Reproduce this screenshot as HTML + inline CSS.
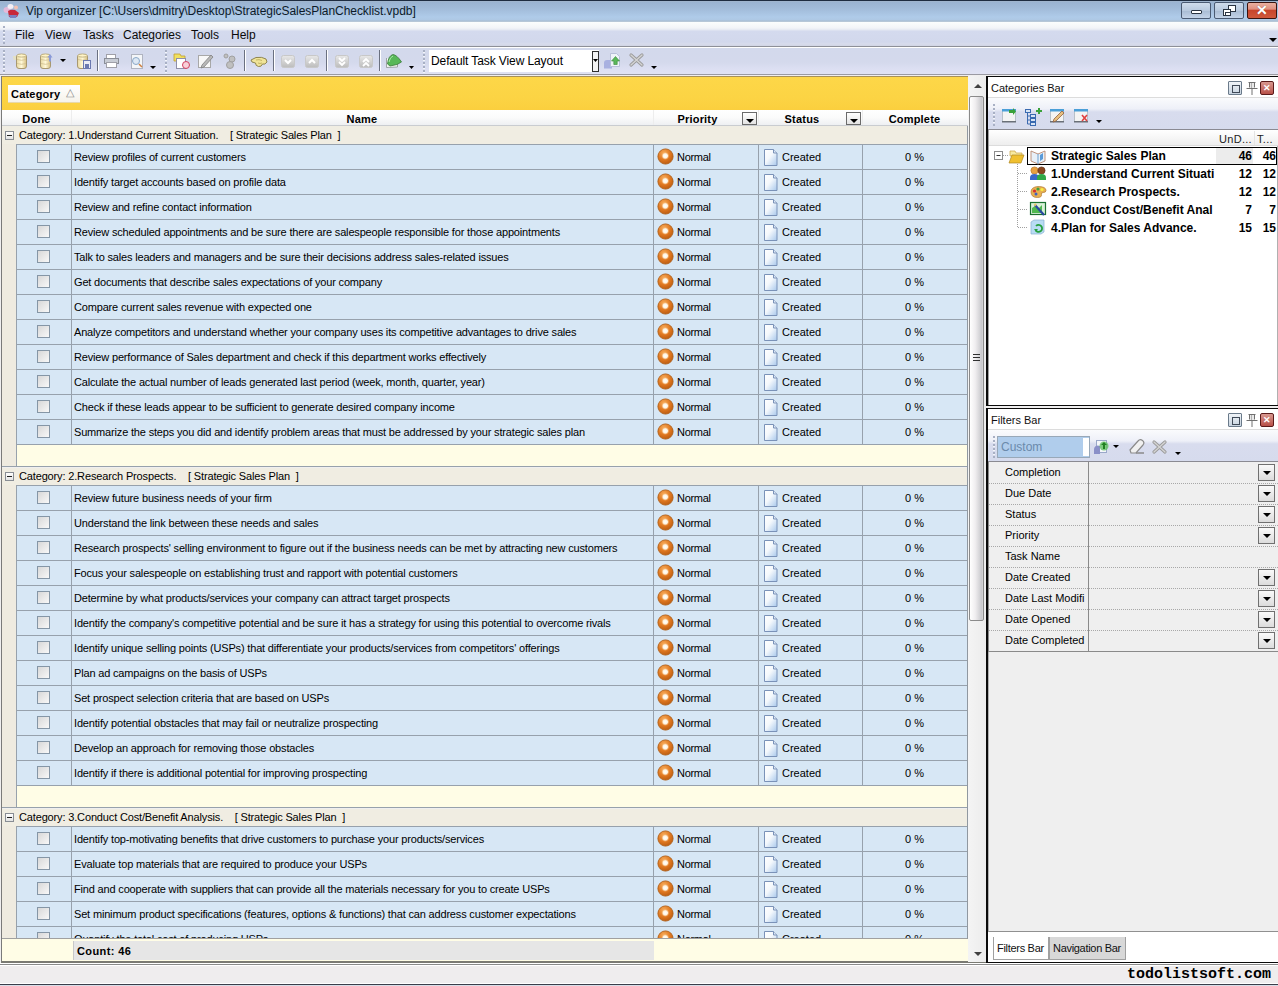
<!DOCTYPE html>
<html><head><meta charset="utf-8"><title>Vip organizer</title>
<style>
*{margin:0;padding:0;box-sizing:border-box}
html,body{width:1278px;height:986px;overflow:hidden;background:#f0efef}
body{font-family:"Liberation Sans",sans-serif;font-size:11px;color:#000;position:relative}
#root{position:absolute;left:0;top:0;width:1278px;height:986px;overflow:hidden}
div,span{position:absolute}
/* title */
#title{left:0;top:0;width:1278px;height:22px;background:linear-gradient(#a6b8cc 0,#9ab3d1 1px,#a2bcda 8px,#afcbe9 16px,#aec8e4 19px,#a9bccf 20px,#c4d2e0 21px);border-top:1px solid #1e2c40}
.ttl{left:26px;top:3px;font-size:12px;color:#0b1a2a;white-space:nowrap;letter-spacing:-0.05px}
.appicon{left:4px;top:3px;width:16px;height:14px;background:radial-gradient(circle at 60% 55%,#d02a3a 0,#e25a6a 45%,rgba(255,255,255,0) 70%)}
.wbtn{top:1px;width:30px;height:17px;border:1px solid #4a5a72;border-radius:2px;background:linear-gradient(#cfdcec 0,#b8c9de 50%,#a8bbd3 51%,#c3d3e8 100%)}
.wclose{background:linear-gradient(#eab0a0 0,#e09080 40%,#c8452c 50%,#d0583c 100%);border-color:#3a1410;color:#fff;text-align:center}
.wclose span{position:static;font-size:14px;font-weight:bold;line-height:15px;color:#fff;text-shadow:0 0 1px #804030}
.wmin{left:9px;top:7px;width:11px;height:4px;border:1px solid #2a3442;background:#fff;border-radius:1px}
.wres1{left:13px;top:2px;width:8px;height:7px;border:1px solid #2a3442;background:#fff}
.wres2{left:8px;top:6px;width:8px;height:7px;border:1px solid #2a3442;background:#fff}
.wres2::after{content:'';position:absolute;left:1px;top:2px;width:4px;height:2px;border:1px solid #2a3442}
/* menu */
#menu{left:0;top:22px;width:1278px;height:25px;background:linear-gradient(#fbfdfd 0,#f2f4f8 6px,#e4e8f2 8px,#d4daee 9px,#d2d8ec 20px,#d8dcec 22px,#d0d4e4 24px);border-bottom:1px solid #8e9098}
.mi{top:6px;font-size:12px;color:#0a0a0a;white-space:nowrap}
.grip{width:2px;background:repeating-linear-gradient(#a8b0c4 0,#a8b0c4 2px,#f4f6fa 2px,#f4f6fa 2.6px,transparent 2.6px,transparent 4px)}
.darr{width:0;height:0;border-left:4px solid transparent;border-right:4px solid transparent;border-top:4px solid #000}
/* toolbar */
#tool{left:0;top:47px;width:1278px;height:28px;background:linear-gradient(#d3d9ec 0,#d4d9ec 55%,#dcdff2 80%,#e0e2f2 100%);border-top:1px solid #fff;border-bottom:1px solid #9a9aa2}
.tsep{top:5px;width:1px;height:18px;background:#7f8797;box-shadow:1px 0 0 #fff}
/* grid */
#gpanel{left:1px;top:76px;width:967px;height:34px;background:linear-gradient(#fdd748 0,#fcd444 60%,#fbcf3e 100%);border-left:1px solid #7a7a7a;border-top:1px solid #a89058}
#catbtn{left:6px;top:8px;width:72px;height:18px;background:linear-gradient(#ffffff,#f6f3ea);border-bottom:1px solid #e8d8a8}
#catbtn b{position:absolute;left:3px;top:3px;font-size:11px;font-weight:bold;letter-spacing:0.2px}
#catbtn .tri{left:58px;top:1px;font-size:11px;color:#8a8a8a}
#ghead{left:1px;top:110px;width:967px;height:16px;background:linear-gradient(#ffffff 0,#fbfbfb 50%,#eef0f2 100%);border-left:1px solid #7a7a7a;border-bottom:1px solid #c9ccd0}
.hd{top:3px;text-align:center;font-weight:bold;font-size:11px;white-space:nowrap;letter-spacing:0.2px}
.hsep{top:0;width:1px;height:15px;background:#ededed}
.hbtn{top:2px;width:15px;height:13px;border:1px solid #6b6b6b;background:linear-gradient(#ffffff,#e4e4e4)}
.hbtn::after{content:"";position:absolute;left:3px;top:6px;border-left:4px solid transparent;border-right:4px solid transparent;border-top:4px solid #000}
#gbody{left:0;top:0;width:0;height:0}
.grp{left:2px;width:966px;height:18px;background:#f0ede2}
.grp .exp{left:3px;top:5px;width:9px;height:9px;border:1px solid #888d94;background:linear-gradient(#fff,#e3e3e3)}
.grp .exp::after{content:"";position:absolute;left:1px;top:3px;width:5px;height:1px;background:#222}
.gt{left:17px;top:3px;white-space:nowrap;letter-spacing:-0.15px}
.hl{left:2px;width:966px;height:1px;background:linear-gradient(to right,#efebe0 0,#efebe0 14px,#97a1ac 14px)}
.row{left:2px;width:966px;height:25px;background:linear-gradient(to right,#efebe0 0,#efebe0 14px,#97a1ac 14px,#97a1ac 15px,#d7e7f5 15px);}
.row::after{content:"";position:absolute;left:14px;right:0;bottom:0;height:1px;background:#97a1ac}
.row::before{content:"";position:absolute;left:69px;top:0;width:1px;height:24px;background:#97a1ac;box-shadow:582px 0 0 #97a1ac,687px 0 0 #97a1ac,791px 0 0 #97a1ac}
.cb{left:35px;top:5px;width:13px;height:13px;border:1px solid #8596a6;background:linear-gradient(135deg,#d8d8d8,#f8f8f8)}
.nm{left:72px;top:6px;white-space:nowrap;letter-spacing:-0.17px}
.pri{position:absolute;left:655px;top:3px}
.pt{left:675px;top:6px;white-space:nowrap;letter-spacing:-0.3px}
.doc{position:absolute;left:762px;top:4px}
.st{left:780px;top:6px;white-space:nowrap}
.pc{left:903px;top:6px;white-space:nowrap}
.newrow{left:2px;width:966px;height:22px;background:linear-gradient(to right,#efebe0 0,#efebe0 14px,#97a1ac 14px,#97a1ac 15px,#fffde6 15px);border-bottom:1px solid #97a1ac}
#gfoot{left:1px;top:938px;width:967px;height:25px;background:#fffde6;border-top:1px solid #a0a0a0;border-left:1px solid #7a7a7a;border-bottom:2px solid #7a7a72}
.cnt{left:71px;top:2px;width:581px;height:19px;background:#e6e6e6;border-left:1px solid #c8c8c8}
.cnt b{position:absolute;left:3px;top:4px;font-size:11px;letter-spacing:0.4px}
#vscroll{left:968px;top:76px;width:18px;height:886px;background:linear-gradient(to right,#f4f4f4,#ececec)}
#gleft{left:1px;top:76px;width:1px;height:886px;background:#7a7a7a}
#gright{left:967px;top:126px;width:1px;height:813px;background:#9098a0}
#gbot{left:1px;top:961px;width:985px;height:2px;background:#7a7a72}
.sarr{left:0;width:17px;height:18px}
.sarr.up::after{content:"";position:absolute;left:6px;top:8px;border-left:4px solid transparent;border-right:4px solid transparent;border-bottom:4px solid #404040}
.sarr.dn{top:870px}
.sarr.dn::after{content:"";position:absolute;left:6px;top:6px;border-left:4px solid transparent;border-right:4px solid transparent;border-top:4px solid #404040}
.thumb{left:1px;top:20px;width:15px;height:525px;border:1px solid #8a8a8a;border-radius:2px;background:linear-gradient(to right,#ffffff 0,#f0eef0 40%,#c8c8cc 90%,#d8d8d8 100%)}
/* status */
#status{left:0;top:963px;width:1278px;height:21px;background:linear-gradient(#ffffff 0,#ffffff 1px,#8a8a8a 1px,#8a8a8a 2px,#ffffff 2px,#ffffff 3px,#efedee 3px,#efedee 20px,#ffffff 20px)}
.brand{right:7px;top:3px;font-family:"Liberation Mono",monospace;font-weight:bold;font-size:15px;color:#000}
#taskbar{left:0;top:984px;width:1278px;height:2px;background:linear-gradient(#3a3e4a 0,#3a3e4a 1px,#d8dee8 1px)}
/* right panels */
#rp{left:0;top:0;width:0;height:0}
.pborder{border:2px solid #0a0a0a;border-right:none;background:#fff}
.phead{background:#fff;border-bottom:1px solid #dcdcdc}
.ptitle{left:3px;top:5px;font-size:11px;color:#111;white-space:nowrap}
.pfloat{top:4px;width:14px;height:14px;border:1px solid #6a7a8a;border-radius:1px;background:linear-gradient(#f0f4f8,#c8d4e0)}
.pfloat::after{content:"";position:absolute;left:3px;top:3px;width:6px;height:6px;border:1px solid #404a58}
.ppin{top:5px;width:11px;height:12px}
.ppin::before{content:"";position:absolute;left:2px;top:0;width:7px;height:6px;border:1px solid #707070;border-top-width:2px}
.ppin::after{content:"";position:absolute;left:5px;top:7px;width:1px;height:5px;background:#707070}
.pclose{top:4px;width:14px;height:14px;border:1px solid #5a1a1a;border-radius:2px;background:linear-gradient(#d89890,#b85048);color:#fff;font-size:9px;font-weight:bold;line-height:12px;text-align:center}
.ptool{background:linear-gradient(#fafbfd 0,#eef0f8 35%,#d8dcee 45%,#d6dbed 100%);border-bottom:1px solid #8a8a92}
.tree{background:#fff;border-left:1px solid #a0a0a0;border-right:1px solid #b0b0b0}
.thead{left:0;top:0;width:290px;height:16px;background:linear-gradient(#ffffff,#eeeeee);border-bottom:1px solid #dcdcdc}
.thead span{font-size:11px;top:3px !important;white-space:nowrap;letter-spacing:0.3px}
.tt{font-weight:bold;font-size:12px;white-space:nowrap;color:#000}
.tn{font-weight:bold;font-size:12px;text-align:right;color:#000}
.combo2{left:9px;top:6px;width:93px;height:22px;background:#b0cdec;border:1px solid #98a8b8}
.combo2 span{left:3px;top:3px;font-size:12px;color:#6b8aab}
.c2btn{left:85px;top:1px;width:6px;height:18px;background:#fff}
.fgrid{left:988px;top:462px;width:290px;height:190px;background:#efefef;border-left:1px solid #8a8a8a;border-bottom:1px solid #8a8a8a}
.frow{left:0;width:289px;height:21px;border-bottom:1px dotted #a8a8a8}
.frow span{left:16px;top:3px;font-size:11px;white-space:nowrap}
.fdiv{left:99px;top:-1px;width:1px;height:22px;background:#8a8a8a}
.fbtn{left:269px;top:1px;width:17px;height:17px;border:1px solid #707070;background:linear-gradient(#fafafa,#dcdcdc)}
.fbtn::after{content:"";position:absolute;left:4px;top:6px;border-left:4px solid transparent;border-right:4px solid transparent;border-top:4px solid #000}
.fempty{left:988px;top:652px;width:290px;height:280px;background:#efefef;border-bottom:1px solid #909090;border-left:1px solid #b0b0b0}
.tabs{left:988px;top:932px;width:290px;height:30px;background:#fff}
.tab{top:5px;height:23px;border:1px solid #a0a0a0;border-top:none;font-size:11px;padding:5px 0 0 3px;letter-spacing:-0.3px;white-space:nowrap;background:#d8d8d8;color:#111}
.tab.act{background:#fff;width:56px}
.tab:not(.act){width:77px}

.tgrip{left:3px;top:257px;width:7px;height:7px;background:repeating-linear-gradient(#303030 0,#303030 1px,transparent 1px,transparent 3px)}

.frow:last-child{border-bottom:none}

</style></head><body>
<svg width="0" height="0" style="position:absolute">
<defs>
<radialGradient id="gpri" cx="0.4" cy="0.3" r="0.75"><stop offset="0" stop-color="#f8b060"/><stop offset="0.55" stop-color="#e07820"/><stop offset="1" stop-color="#b85a10"/></radialGradient>
<radialGradient id="gspot" cx="0.5" cy="0.5" r="0.5"><stop offset="0" stop-color="#ffffff"/><stop offset="0.55" stop-color="#fff4e0"/><stop offset="1" stop-color="#f4b070" stop-opacity="0"/></radialGradient>
<linearGradient id="gdoc" x1="0" y1="0" x2="1" y2="1"><stop offset="0" stop-color="#ffffff"/><stop offset="0.45" stop-color="#f4f8fc"/><stop offset="1" stop-color="#a8c8ec"/></linearGradient>
<symbol id="ipri" viewBox="0 0 17 17"><circle cx="8.5" cy="8.5" r="7.6" fill="url(#gpri)" stroke="#b06018" stroke-width="0.9"/><circle cx="8.3" cy="7.9" r="4" fill="url(#gspot)"/></symbol>
<symbol id="idoc" viewBox="0 0 14 17"><path d="M0.5 0.5h9l3.5 3.5v12.5h-12.5z" fill="url(#gdoc)" stroke="#7a92b8"/><path d="M9.5 0.5v3.5h3.5" fill="#dbe6f4" stroke="#7a92b8"/></symbol>
</defs></svg>
<div id="root">
<!-- title bar -->
<div id="title"><svg style="position:absolute;left:2px;top:1px" width="18" height="18" viewBox="0 0 18 18"><ellipse cx="5" cy="8" rx="3.5" ry="3" fill="#f4b8d8" opacity="0.8"/><ellipse cx="8.5" cy="4.5" rx="3" ry="2.5" fill="#f4eef4"/><ellipse cx="14" cy="5.5" rx="2" ry="2" fill="#f4c0b0"/><path d="M6 9q3-2 7-1l4 3-2 4h-8z" fill="#c8283a"/><path d="M7 13h8l-1 3h-6z" fill="#7a80c0"/></svg><span class="ttl">Vip organizer [C:\Users\dmitry\Desktop\StrategicSalesPlanChecklist.vpdb]</span>
<div class="wbtn" style="left:1181px"><div class="wmin"></div></div>
<div class="wbtn" style="left:1214px"><div class="wres1"></div><div class="wres2"></div></div>
<div class="wbtn wclose" style="left:1247px"><span>&#x2715;</span></div>
</div>
<!-- menu -->
<div id="menu"><div class="grip" style="left:3px;top:4px;height:18px"></div>
<span class="mi" style="left:15px">File</span>
<span class="mi" style="left:45px">View</span>
<span class="mi" style="left:83px">Tasks</span>
<span class="mi" style="left:123px">Categories</span>
<span class="mi" style="left:191px">Tools</span>
<span class="mi" style="left:231px">Help</span>
<div class="darr" style="left:1269px;top:16px"></div>
</div>
<!-- toolbar -->
<div id="tool">
<div class="grip" style="left:3px;top:2px;height:23px"></div>
<div class="grip" style="left:165px;top:2px;height:23px"></div>
<div class="grip" style="left:423px;top:2px;height:23px"></div>
<svg style="position:absolute;left:0;top:-48px" width="700" height="80" viewBox="0 0 700 80">
 <defs>
  <linearGradient id="db" x1="0" x2="1"><stop offset="0" stop-color="#e8d8a0"/><stop offset="0.5" stop-color="#fff8d8"/><stop offset="1" stop-color="#d8c080"/></linearGradient>
  <linearGradient id="gb" x1="0" y1="0" x2="0" y2="1"><stop offset="0" stop-color="#e8e8e8"/><stop offset="1" stop-color="#bcbcbc"/></linearGradient>
 </defs>
 <!-- db1 -->
 <g><rect x="16.5" y="54.5" width="10" height="14" rx="2.5" fill="url(#db)" stroke="#a89870"/><ellipse cx="21.5" cy="55.5" rx="4.5" ry="1.6" fill="#fff4c8" stroke="#b8a878" stroke-width="0.8"/><path d="M17 59.5q4.5 1.6 9 0M17 63.5q4.5 1.6 9 0" stroke="#d0c090" fill="none" stroke-width="0.8"/><path d="M13 57h3M13.5 59h2.5" stroke="#f4e8a0" stroke-width="1.2"/></g>
 <!-- db2 -->
 <g><rect x="40.5" y="54.5" width="10" height="14" rx="2.5" fill="url(#db)" stroke="#a89870"/><ellipse cx="45.5" cy="55.5" rx="4.5" ry="1.6" fill="#fff4c8" stroke="#b8a878" stroke-width="0.8"/><path d="M41 59.5q4.5 1.6 9 0M41 63.5q4.5 1.6 9 0" stroke="#d0c090" fill="none" stroke-width="0.8"/><path d="M50 54l2.5 3.5h-1.5v4h-2v-4h-1.5z" fill="#8a9ad8"/></g>
 <path d="M60 59h6l-3 3z" fill="#000"/>
 <!-- db3 -->
 <g><rect x="77.5" y="54.5" width="10" height="14" rx="2.5" fill="url(#db)" stroke="#a89870"/><ellipse cx="82.5" cy="55.5" rx="4.5" ry="1.6" fill="#fff4c8" stroke="#b8a878" stroke-width="0.8"/><path d="M78 59.5q4.5 1.6 9 0" stroke="#d0c090" fill="none" stroke-width="0.8"/><rect x="83.5" y="60.5" width="7" height="8" fill="#e8eaf4" stroke="#6a78b0"/><rect x="85" y="64" width="4" height="4" fill="#6a78b0"/></g>
 <!-- sep -->
 <path d="M97.5 50v21" stroke="#6a7080"/><path d="M98.5 50v21" stroke="#fff"/>
 <!-- printer -->
 <g><rect x="106.5" y="54.5" width="9" height="5" fill="#fff" stroke="#a0a0a8"/><rect x="104.5" y="58.5" width="14" height="5" fill="#c8ccd4" stroke="#8a8e98"/><rect x="106.5" y="62.5" width="10" height="5" fill="#fff" stroke="#a0a0a8"/></g>
 <!-- preview -->
 <g><rect x="131.5" y="54.5" width="11" height="14" fill="#f4f6f8" stroke="#b0b4c0"/><circle cx="136" cy="61" r="3.5" fill="#dde8f4" stroke="#8aa8c8"/><path d="M139 64l3 3" stroke="#d08040" stroke-width="1.5"/></g>
 <path d="M150 66h6l-3 3z" fill="#000"/>
 <!-- new task -->
 <g><path d="M174 54h6l1 2h4v5h-11z" fill="#f0e060" stroke="#c0a030" stroke-width="0.8"/><rect x="176.5" y="58.5" width="9" height="10" fill="#fff" stroke="#9090a8"/><circle cx="186" cy="65" r="3.5" fill="#f8d0d8" stroke="#d04060"/></g>
 <!-- pencil -->
 <g><rect x="198.5" y="55.5" width="12" height="12" fill="#f8f8f8" stroke="#a8a8a8"/><path d="M202 65l9-10 2 2-9 10-3 1z" fill="#b8b8b8" stroke="#808080" stroke-width="0.8"/></g>
 <!-- gears -->
 <g fill="#c0c0c0" stroke="#a0a0a0"><circle cx="226" cy="56" r="2"/><circle cx="232" cy="59" r="3"/><circle cx="230" cy="65" r="3.5"/></g>
 <path d="M244.5 50v21" stroke="#6a7080"/><path d="M245.5 50v21" stroke="#fff"/>
 <!-- handshake -->
 <path d="M251 60L256 57.5Q262 56.5 266 59L267 62Q265 65 262.5 64Q261.5 67 258.5 66.5Q255.5 66 255.5 63L252 62Z" fill="#f0e498" stroke="#857a44" stroke-width="0.9"/><path d="M256 60q3-1 6 0.5M258 63q2 1 4 0" stroke="#b0a050" stroke-width="0.7" fill="none"/>
 <path d="M273.5 50v21" stroke="#6a7080"/><path d="M274.5 50v21" stroke="#fff"/>
 <!-- gray buttons -->
 <g><rect x="281.5" y="55.5" width="13" height="12" rx="2" fill="url(#gb)" stroke="#c8c8c8"/><path d="M285 60l3 3 3-3" stroke="#fff" stroke-width="2" fill="none"/></g>
 <g><rect x="305.5" y="55.5" width="13" height="12" rx="2" fill="url(#gb)" stroke="#c8c8c8"/><path d="M309 63l3-3 3 3" stroke="#fff" stroke-width="2" fill="none"/></g>
 <path d="M326.5 50v21" stroke="#6a7080"/><path d="M327.5 50v21" stroke="#fff"/>
 <g><rect x="335.5" y="55.5" width="13" height="12" rx="2" fill="url(#gb)" stroke="#c8c8c8"/><path d="M339 58l3 3 3-3M339 62l3 3 3-3" stroke="#fff" stroke-width="1.8" fill="none"/></g>
 <g><rect x="359.5" y="55.5" width="13" height="12" rx="2" fill="url(#gb)" stroke="#c8c8c8"/><path d="M363 62l3-3 3 3M363 66l3-3 3 3" stroke="#fff" stroke-width="1.8" fill="none"/></g>
 <path d="M379.5 50v21" stroke="#6a7080"/><path d="M380.5 50v21" stroke="#fff"/>
 <!-- green -->
 <g><path d="M386.5 58v9.5l11-0.5v-3" fill="#f4f8f4" stroke="#8a9090" stroke-width="0.8"/><path d="M387.5 64Q388.5 55.5 393 54.5Q397 55 401.5 62L397 64.5L390 66Z" fill="#58b858" stroke="#3a7a3a" stroke-width="0.8"/><path d="M389 62q1-5 4-6" stroke="#a8e8a8" stroke-width="1" fill="none"/></g>
 <path d="M409 66h5l-2.5 3z" fill="#000"/>
 <!-- combo -->
 <rect x="429" y="50" width="170" height="22" fill="#fff"/>
 <rect x="592.5" y="51.5" width="6" height="20" fill="#f4f4f4" stroke="#303030"/>
 <path d="M593 59h5l-2.5 3z" fill="#000"/>
 <!-- save layout -->
 <g><path d="M604 63a3 3 0 0 1 3-3h5v8.5h-8z" fill="#a8b0e0"/><path d="M610.5 53.5h6l3 3v10h-9z" fill="#eef4f8" stroke="#b8c0d8"/><path d="M615.5 56.5l4 4.5h-2.3v3.5h-3.4v-3.5h-2.3z" fill="#5ab85a" stroke="#3a8a3a" stroke-width="0.6"/></g>
 <path d="M631 55l11 10M642 55l-11 10" stroke="#9a9a9a" stroke-width="3.2" stroke-linecap="round"/><path d="M631 55l11 10M642 55l-11 10" stroke="#d4d4d4" stroke-width="1.4" stroke-linecap="round"/>
 <path d="M651 66h6l-3 3z" fill="#000"/>
</svg>
<span style="left:431px;top:6px;font-size:12px;white-space:nowrap;letter-spacing:-0.1px">Default Task View Layout</span>

</div>
<!-- grid -->
<div id="grid">
<div id="gpanel"><div id="catbtn"><b>Category</b><span class="tri">&#x25B3;</span></div></div>
<div id="ghead">
<span class="hd" style="left:0px;width:69px">Done</span>
<span class="hd" style="left:69px;width:582px">Name</span>
<span class="hd" style="left:651px;width:89px">Priority</span><div class="hbtn" style="left:740px"></div>
<span class="hd" style="left:756px;width:88px">Status</span><div class="hbtn" style="left:844px"></div>
<span class="hd" style="left:860px;width:105px">Complete</span>
<div class="hsep" style="left:69px"></div><div class="hsep" style="left:651px"></div><div class="hsep" style="left:756px"></div><div class="hsep" style="left:860px"></div>
</div>
<div id="gbody">
<div class='grp' style='top:126px;height:18px'><div class='exp' style='top:5px'></div><span class='gt' style='top:3px'>Category: 1.Understand Current Situation. &nbsp;&nbsp;&nbsp;[ Strategic Sales Plan &nbsp;]</span></div><div class='hl' style='top:144px'></div><div class='row' style='top:145px'><div class='cb'></div><span class='nm'>Review profiles of current customers</span><svg class='pri' width='17' height='17'><use href='#ipri'/></svg><span class='pt'>Normal</span><svg class='doc' width='14' height='17'><use href='#idoc'/></svg><span class='st'>Created</span><span class='pc'>0 %</span></div><div class='row' style='top:170px'><div class='cb'></div><span class='nm'>Identify target accounts based on profile data</span><svg class='pri' width='17' height='17'><use href='#ipri'/></svg><span class='pt'>Normal</span><svg class='doc' width='14' height='17'><use href='#idoc'/></svg><span class='st'>Created</span><span class='pc'>0 %</span></div><div class='row' style='top:195px'><div class='cb'></div><span class='nm'>Review and refine contact information</span><svg class='pri' width='17' height='17'><use href='#ipri'/></svg><span class='pt'>Normal</span><svg class='doc' width='14' height='17'><use href='#idoc'/></svg><span class='st'>Created</span><span class='pc'>0 %</span></div><div class='row' style='top:220px'><div class='cb'></div><span class='nm'>Review scheduled appointments and be sure there are salespeople responsible for those appointments</span><svg class='pri' width='17' height='17'><use href='#ipri'/></svg><span class='pt'>Normal</span><svg class='doc' width='14' height='17'><use href='#idoc'/></svg><span class='st'>Created</span><span class='pc'>0 %</span></div><div class='row' style='top:245px'><div class='cb'></div><span class='nm'>Talk to sales leaders and managers and be sure their decisions address sales-related issues</span><svg class='pri' width='17' height='17'><use href='#ipri'/></svg><span class='pt'>Normal</span><svg class='doc' width='14' height='17'><use href='#idoc'/></svg><span class='st'>Created</span><span class='pc'>0 %</span></div><div class='row' style='top:270px'><div class='cb'></div><span class='nm'>Get documents that describe sales expectations of your company</span><svg class='pri' width='17' height='17'><use href='#ipri'/></svg><span class='pt'>Normal</span><svg class='doc' width='14' height='17'><use href='#idoc'/></svg><span class='st'>Created</span><span class='pc'>0 %</span></div><div class='row' style='top:295px'><div class='cb'></div><span class='nm'>Compare current sales revenue with expected one</span><svg class='pri' width='17' height='17'><use href='#ipri'/></svg><span class='pt'>Normal</span><svg class='doc' width='14' height='17'><use href='#idoc'/></svg><span class='st'>Created</span><span class='pc'>0 %</span></div><div class='row' style='top:320px'><div class='cb'></div><span class='nm'>Analyze competitors and understand whether your company uses its competitive advantages to drive sales</span><svg class='pri' width='17' height='17'><use href='#ipri'/></svg><span class='pt'>Normal</span><svg class='doc' width='14' height='17'><use href='#idoc'/></svg><span class='st'>Created</span><span class='pc'>0 %</span></div><div class='row' style='top:345px'><div class='cb'></div><span class='nm'>Review performance of Sales department and check if this department works effectively</span><svg class='pri' width='17' height='17'><use href='#ipri'/></svg><span class='pt'>Normal</span><svg class='doc' width='14' height='17'><use href='#idoc'/></svg><span class='st'>Created</span><span class='pc'>0 %</span></div><div class='row' style='top:370px'><div class='cb'></div><span class='nm'>Calculate the actual number of leads generated last period (week, month, quarter, year)</span><svg class='pri' width='17' height='17'><use href='#ipri'/></svg><span class='pt'>Normal</span><svg class='doc' width='14' height='17'><use href='#idoc'/></svg><span class='st'>Created</span><span class='pc'>0 %</span></div><div class='row' style='top:395px'><div class='cb'></div><span class='nm'>Check if these leads appear to be sufficient to generate desired company income</span><svg class='pri' width='17' height='17'><use href='#ipri'/></svg><span class='pt'>Normal</span><svg class='doc' width='14' height='17'><use href='#idoc'/></svg><span class='st'>Created</span><span class='pc'>0 %</span></div><div class='row' style='top:420px'><div class='cb'></div><span class='nm'>Summarize the steps you did and identify problem areas that must be addressed by your strategic sales plan</span><svg class='pri' width='17' height='17'><use href='#ipri'/></svg><span class='pt'>Normal</span><svg class='doc' width='14' height='17'><use href='#idoc'/></svg><span class='st'>Created</span><span class='pc'>0 %</span></div><div class='newrow' style='top:445px'></div><div class='grp' style='top:468px;height:17px'><div class='exp' style='top:4px'></div><span class='gt' style='top:2px'>Category: 2.Research Prospects. &nbsp;&nbsp;&nbsp;[ Strategic Sales Plan &nbsp;]</span></div><div class='hl' style='top:485px'></div><div class='row' style='top:486px'><div class='cb'></div><span class='nm'>Review future business needs of your firm</span><svg class='pri' width='17' height='17'><use href='#ipri'/></svg><span class='pt'>Normal</span><svg class='doc' width='14' height='17'><use href='#idoc'/></svg><span class='st'>Created</span><span class='pc'>0 %</span></div><div class='row' style='top:511px'><div class='cb'></div><span class='nm'>Understand the link between these needs and sales</span><svg class='pri' width='17' height='17'><use href='#ipri'/></svg><span class='pt'>Normal</span><svg class='doc' width='14' height='17'><use href='#idoc'/></svg><span class='st'>Created</span><span class='pc'>0 %</span></div><div class='row' style='top:536px'><div class='cb'></div><span class='nm'>Research prospects&#39; selling environment to figure out if the business needs can be met by attracting new customers</span><svg class='pri' width='17' height='17'><use href='#ipri'/></svg><span class='pt'>Normal</span><svg class='doc' width='14' height='17'><use href='#idoc'/></svg><span class='st'>Created</span><span class='pc'>0 %</span></div><div class='row' style='top:561px'><div class='cb'></div><span class='nm'>Focus your salespeople on establishing trust and rapport with potential customers</span><svg class='pri' width='17' height='17'><use href='#ipri'/></svg><span class='pt'>Normal</span><svg class='doc' width='14' height='17'><use href='#idoc'/></svg><span class='st'>Created</span><span class='pc'>0 %</span></div><div class='row' style='top:586px'><div class='cb'></div><span class='nm'>Determine by what products/services your company can attract target prospects</span><svg class='pri' width='17' height='17'><use href='#ipri'/></svg><span class='pt'>Normal</span><svg class='doc' width='14' height='17'><use href='#idoc'/></svg><span class='st'>Created</span><span class='pc'>0 %</span></div><div class='row' style='top:611px'><div class='cb'></div><span class='nm'>Identify the company&#39;s competitive potential and be sure it has a strategy for using this potential to overcome rivals</span><svg class='pri' width='17' height='17'><use href='#ipri'/></svg><span class='pt'>Normal</span><svg class='doc' width='14' height='17'><use href='#idoc'/></svg><span class='st'>Created</span><span class='pc'>0 %</span></div><div class='row' style='top:636px'><div class='cb'></div><span class='nm'>Identify unique selling points (USPs) that differentiate your products/services from competitors&#39; offerings</span><svg class='pri' width='17' height='17'><use href='#ipri'/></svg><span class='pt'>Normal</span><svg class='doc' width='14' height='17'><use href='#idoc'/></svg><span class='st'>Created</span><span class='pc'>0 %</span></div><div class='row' style='top:661px'><div class='cb'></div><span class='nm'>Plan ad campaigns on the basis of USPs</span><svg class='pri' width='17' height='17'><use href='#ipri'/></svg><span class='pt'>Normal</span><svg class='doc' width='14' height='17'><use href='#idoc'/></svg><span class='st'>Created</span><span class='pc'>0 %</span></div><div class='row' style='top:686px'><div class='cb'></div><span class='nm'>Set prospect selection criteria that are based on USPs</span><svg class='pri' width='17' height='17'><use href='#ipri'/></svg><span class='pt'>Normal</span><svg class='doc' width='14' height='17'><use href='#idoc'/></svg><span class='st'>Created</span><span class='pc'>0 %</span></div><div class='row' style='top:711px'><div class='cb'></div><span class='nm'>Identify potential obstacles that may fail or neutralize prospecting</span><svg class='pri' width='17' height='17'><use href='#ipri'/></svg><span class='pt'>Normal</span><svg class='doc' width='14' height='17'><use href='#idoc'/></svg><span class='st'>Created</span><span class='pc'>0 %</span></div><div class='row' style='top:736px'><div class='cb'></div><span class='nm'>Develop an approach for removing those obstacles</span><svg class='pri' width='17' height='17'><use href='#ipri'/></svg><span class='pt'>Normal</span><svg class='doc' width='14' height='17'><use href='#idoc'/></svg><span class='st'>Created</span><span class='pc'>0 %</span></div><div class='row' style='top:761px'><div class='cb'></div><span class='nm'>Identify if there is additional potential for improving prospecting</span><svg class='pri' width='17' height='17'><use href='#ipri'/></svg><span class='pt'>Normal</span><svg class='doc' width='14' height='17'><use href='#idoc'/></svg><span class='st'>Created</span><span class='pc'>0 %</span></div><div class='newrow' style='top:786px'></div><div class='grp' style='top:809px;height:17px'><div class='exp' style='top:4px'></div><span class='gt' style='top:2px'>Category: 3.Conduct Cost/Benefit Analysis. &nbsp;&nbsp;&nbsp;[ Strategic Sales Plan &nbsp;]</span></div><div class='hl' style='top:826px'></div><div class='row' style='top:827px'><div class='cb'></div><span class='nm'>Identify top-motivating benefits that drive customers to purchase your products/services</span><svg class='pri' width='17' height='17'><use href='#ipri'/></svg><span class='pt'>Normal</span><svg class='doc' width='14' height='17'><use href='#idoc'/></svg><span class='st'>Created</span><span class='pc'>0 %</span></div><div class='row' style='top:852px'><div class='cb'></div><span class='nm'>Evaluate top materials that are required to produce your USPs</span><svg class='pri' width='17' height='17'><use href='#ipri'/></svg><span class='pt'>Normal</span><svg class='doc' width='14' height='17'><use href='#idoc'/></svg><span class='st'>Created</span><span class='pc'>0 %</span></div><div class='row' style='top:877px'><div class='cb'></div><span class='nm'>Find and cooperate with suppliers that can provide all the materials necessary for you to create USPs</span><svg class='pri' width='17' height='17'><use href='#ipri'/></svg><span class='pt'>Normal</span><svg class='doc' width='14' height='17'><use href='#idoc'/></svg><span class='st'>Created</span><span class='pc'>0 %</span></div><div class='row' style='top:902px'><div class='cb'></div><span class='nm'>Set minimum product specifications (features, options &amp; functions) that can address customer expectations</span><svg class='pri' width='17' height='17'><use href='#ipri'/></svg><span class='pt'>Normal</span><svg class='doc' width='14' height='17'><use href='#idoc'/></svg><span class='st'>Created</span><span class='pc'>0 %</span></div><div class='row' style='top:927px'><div class='cb'></div><span class='nm'>Quantify the total cost of producing USPs</span><svg class='pri' width='17' height='17'><use href='#ipri'/></svg><span class='pt'>Normal</span><svg class='doc' width='14' height='17'><use href='#idoc'/></svg><span class='st'>Created</span><span class='pc'>0 %</span></div>
</div>
<div id="gfoot"><div class="cnt"><b>Count: 46</b></div><div class="cnt2"></div></div>
<div id="gleft"></div><div id="gright"></div><div id="gbot"></div>
<div id="vscroll"><div class="sarr up"></div><div class="thumb"><div class="tgrip"></div></div><div class="sarr dn"></div></div>
</div>
<!-- splitter + right panels -->
<div id="rp">
<!-- Categories Bar -->
<div class="pborder" style="left:986px;top:76px;width:292px;height:330px"></div>
<div class="phead" style="left:988px;top:77px;width:290px;height:21px"><span class="ptitle">Categories Bar</span>
<div class="pfloat" style="left:240px"></div><div style="left:258px;top:5px;width:12px;height:13px"><svg class="ppin2" width="12" height="13" viewBox="0 0 12 13"><path d="M2.5 0.5h7M3.5 0.5v5M8.5 0.5v5M0.5 6.5h11M6 7v6" stroke="#707070" stroke-width="1" fill="none"/><path d="M4 1h4v5h-4z" fill="#e8e8e8"/><path d="M5.5 1v5" stroke="#b0b0b0"/></svg></div><div class="pclose" style="left:272px">&#x2715;</div></div>
<div class="ptool" style="left:988px;top:98px;width:290px;height:32px">
<div class="grip" style="left:5px;top:6px;height:22px"></div>
<svg style="position:absolute;left:0;top:0" width="290" height="31" viewBox="988 98 290 31">
 <!-- icon1 window + green arrow -->
 <rect x="1002.5" y="110.5" width="13" height="11" fill="#f4f4f4" stroke="#b8c0c8"/>
 <rect x="1002" y="109" width="14" height="2.5" fill="#4a9fd8"/>
 <rect x="1002" y="121" width="14" height="1.5" fill="#6a7078"/>
 <path d="M1009 110h4v-2l3 3.5-3 3.5v-2h-4z" fill="#3aa13a"/>
 <!-- icon2 tree -->
 <rect x="1025.5" y="109.5" width="5" height="3" fill="#d8e4f4" stroke="#3a6ab0"/>
 <rect x="1030.5" y="114.5" width="5" height="3" fill="#d8e4f4" stroke="#3a6ab0"/>
 <rect x="1030.5" y="118.5" width="5" height="3" fill="#d8e4f4" stroke="#3a6ab0"/>
 <rect x="1030.5" y="122.5" width="5" height="3" fill="#d8e4f4" stroke="#3a6ab0"/>
 <path d="M1027.5 112v12h3M1027.5 116h3M1027.5 120h3" stroke="#3a6ab0" fill="none"/>
 <path d="M1036 110h2v-2h2v2h2v2h-2v2h-2v-2h-2z" fill="#3aa13a"/>
 <!-- icon3 window + pencil -->
 <rect x="1050.5" y="110.5" width="13" height="11" fill="#f4f4f4" stroke="#b8c0c8"/>
 <rect x="1050" y="109" width="14" height="2.5" fill="#4a9fd8"/>
 <rect x="1050" y="121" width="14" height="1.5" fill="#6a7078"/>
 <path d="M1054 119l8-8 2 2-8 8-3 1z" fill="#e8c080" stroke="#906040" stroke-width="0.8"/>
 <!-- icon4 window + red x -->
 <rect x="1074.5" y="110.5" width="13" height="11" fill="#f4f4f4" stroke="#b8c0c8"/>
 <rect x="1074" y="109" width="14" height="2.5" fill="#4a9fd8"/>
 <rect x="1074" y="121" width="14" height="1.5" fill="#6a7078"/>
 <path d="M1082 115l5 6M1087 115l-5 6" stroke="#e04040" stroke-width="1.6"/>
 <path d="M1096 120h6l-3 3z" fill="#000"/>
</svg>
</div>
<div class="tree" style="left:988px;top:130px;width:290px;height:275px">
 <div class="thead"><span style="left:230px;top:2px;color:#222">UnD...</span><div style="left:265px;top:1px;width:1px;height:14px;background:#e4e4e4"></div><span style="left:268px;top:2px;color:#222">T...</span></div>
</div>
<svg style="position:absolute;left:988px;top:146px" width="290" height="100" viewBox="988 146 290 100">
 <!-- expander -->
 <rect x="994.5" y="151.5" width="8" height="8" fill="#fff" stroke="#8d8d8d"/>
 <path d="M996.5 155.5h4" stroke="#333"/>
 <path d="M1003 155.5h5" stroke="#a0a0a0" stroke-dasharray="1 1"/>
 <path d="M1017.5 164v63" stroke="#a0a0a0" stroke-dasharray="1 1"/>
 <path d="M1018 173.5h10M1018 191.5h10M1018 209.5h10M1018 227.5h10" stroke="#a0a0a0" stroke-dasharray="1 1"/>
 <!-- folder -->
 <path d="M1010 151h5l1 2h6v3h-12z" fill="#f7e9a0" stroke="#c8a040" stroke-width="0.7"/>
 <path d="M1009 163l3-8h12l-3 8z" fill="#f0c030" stroke="#b08820" stroke-width="0.7"/>
 <!-- selected rect -->
 <rect x="1027.5" y="147.5" width="249" height="17" fill="none" stroke="#000"/>
 <rect x="1216" y="148" width="37" height="16" fill="#ececec"/>
 <!-- book icon -->
 <path d="M1031 151l7 3 7-3v10l-7 3-7-3z" fill="#e8f0f8" stroke="#b88870" stroke-width="0.9"/>
 <path d="M1038 154v10" stroke="#6aa0d0"/>
 <path d="M1040 155l3-2v6l-3 2z" fill="#5a9ad8"/>
 <!-- people -->
 <circle cx="1034.5" cy="170.5" r="3.6" fill="#e8a040" stroke="#b07020" stroke-width="0.6"/><path d="M1030 180v-2.5a4.5 3.5 0 0 1 9 0v2.5z" fill="#3a68c8"/>
 <circle cx="1041.5" cy="170.5" r="3.6" fill="#8a4820" stroke="#5a2a10" stroke-width="0.6"/><path d="M1037 180v-2.5a4.5 3.5 0 0 1 9 0v2.5z" fill="#30a848"/>
 <!-- palette -->
 <path d="M1031 192q0-5 7-5.5q8 0 8 4q0 2-3 2q-2 0-1.5 2q0.5 3-4 3q-6.5 0-6.5-5.5z" fill="#e8b050" stroke="#b07830" stroke-width="0.7"/>
 <circle cx="1034.5" cy="191" r="1.6" fill="#d83030"/><circle cx="1038" cy="189" r="1.6" fill="#40a040"/><circle cx="1042" cy="189.5" r="1.5" fill="#f8f040"/><circle cx="1036" cy="194" r="1.5" fill="#4060c0"/>
 <!-- chart pen -->
 <rect x="1030.5" y="202.5" width="15" height="12" fill="#d8f0d8" stroke="#1a7030" stroke-width="1.2"/>
 <path d="M1032 213v-5l3-2 3 3 4-4v8z" fill="#50b850"/>
 <path d="M1035 205l9 10" stroke="#2848a0" stroke-width="2.2"/>
 <path d="M1034.5 204l1.5 1.5" stroke="#e8c060" stroke-width="2.2"/>
 <!-- recycle -->
 <path d="M1031 222l3-2h10v12l-3 2h-10z" fill="#b8dcf4" stroke="#88b0d0" stroke-width="0.7"/>
 <path d="M1036 226a3.5 3.5 0 1 1 -0.5 4" fill="none" stroke="#28a040" stroke-width="1.8"/>
 <path d="M1034 229l2 2.5 2-2.5z" fill="#28a040"/>
</svg>
<span class="tt" style="left:1051px;top:149px">Strategic Sales Plan</span><span class="tn" style="left:1216px;top:149px;width:36px">46</span><span class="tn" style="left:1254px;top:149px;width:22px">46</span>
<span class="tt" style="left:1051px;top:167px">1.Understand Current Situati</span><span class="tn" style="left:1216px;top:167px;width:36px">12</span><span class="tn" style="left:1254px;top:167px;width:22px">12</span>
<span class="tt" style="left:1051px;top:185px">2.Research Prospects.</span><span class="tn" style="left:1216px;top:185px;width:36px">12</span><span class="tn" style="left:1254px;top:185px;width:22px">12</span>
<span class="tt" style="left:1051px;top:203px">3.Conduct Cost/Benefit Anal</span><span class="tn" style="left:1216px;top:203px;width:36px">7</span><span class="tn" style="left:1254px;top:203px;width:22px">7</span>
<span class="tt" style="left:1051px;top:221px">4.Plan for Sales Advance.</span><span class="tn" style="left:1216px;top:221px;width:36px">15</span><span class="tn" style="left:1254px;top:221px;width:22px">15</span>

<!-- Filters Bar -->
<div class="pborder" style="left:986px;top:408px;width:292px;height:555px"></div>
<div class="phead" style="left:988px;top:409px;width:290px;height:21px"><span class="ptitle">Filters Bar</span>
<div class="pfloat" style="left:240px"></div><div style="left:258px;top:5px;width:12px;height:13px"><svg class="ppin2" width="12" height="13" viewBox="0 0 12 13"><path d="M2.5 0.5h7M3.5 0.5v5M8.5 0.5v5M0.5 6.5h11M6 7v6" stroke="#707070" stroke-width="1" fill="none"/><path d="M4 1h4v5h-4z" fill="#e8e8e8"/><path d="M5.5 1v5" stroke="#b0b0b0"/></svg></div><div class="pclose" style="left:272px">&#x2715;</div></div>
<div class="ptool" style="left:988px;top:430px;width:290px;height:32px">
<div class="grip" style="left:5px;top:6px;height:22px"></div>
<div class="combo2"><span>Custom</span><div class="c2btn"></div></div>
<svg style="position:absolute;left:0;top:0" width="290" height="32" viewBox="988 430 290 32">
 <rect x="1096.5" y="440.5" width="10" height="12" fill="#f4f6fa" stroke="#9aa8c8"/>
 <path d="M1094 450a4 4 0 0 1 6 -4v8h-6z" fill="#8a90c8"/>
 <circle cx="1104" cy="446" r="4.5" fill="#60c060" opacity="0.8"/>
 <path d="M1104 442l3 3h-2v4h-2v-4h-2z" fill="#208020"/>
 <path d="M1113 445h6l-3 3z" fill="#000"/>
 <path d="M1130 450l8-9a3 3 0 0 1 5 4l-7 8h-5z" fill="#f0f0f0" stroke="#8a8a8a" stroke-width="1.2"/>
 <path d="M1136 453h8" stroke="#8a8a8a" stroke-width="1.5"/>
 <path d="M1154 442l11 10M1165 442l-11 10" stroke="#9a9a9a" stroke-width="3.2" stroke-linecap="round"/><path d="M1154 442l11 10M1165 442l-11 10" stroke="#d4d4d4" stroke-width="1.4" stroke-linecap="round"/>
 <path d="M1175 452h6l-3 3z" fill="#000"/>
</svg>
</div>
<div class="fgrid">
<div class='frow' style='top:1px'><span>Completion</span><div class='fdiv'></div><div class='fbtn'></div></div><div class='frow' style='top:22px'><span>Due Date</span><div class='fdiv'></div><div class='fbtn'></div></div><div class='frow' style='top:43px'><span>Status</span><div class='fdiv'></div><div class='fbtn'></div></div><div class='frow' style='top:64px'><span>Priority</span><div class='fdiv'></div><div class='fbtn'></div></div><div class='frow' style='top:85px'><span>Task Name</span><div class='fdiv'></div></div><div class='frow' style='top:106px'><span>Date Created</span><div class='fdiv'></div><div class='fbtn'></div></div><div class='frow' style='top:127px'><span>Date Last Modifi</span><div class='fdiv'></div><div class='fbtn'></div></div><div class='frow' style='top:148px'><span>Date Opened</span><div class='fdiv'></div><div class='fbtn'></div></div><div class='frow' style='top:169px'><span>Date Completed</span><div class='fdiv'></div><div class='fbtn'></div></div>
</div>
<div class="fempty"></div>
<div class="tabs">
 <div class="tab act" style="left:5px">Filters Bar</div>
 <div class="tab" style="left:61px">Navigation Bar</div>
</div>
</div>

<div id="status"><span class="brand">todolistsoft.com</span></div>
<div id="taskbar"></div>
</div>
</body></html>
